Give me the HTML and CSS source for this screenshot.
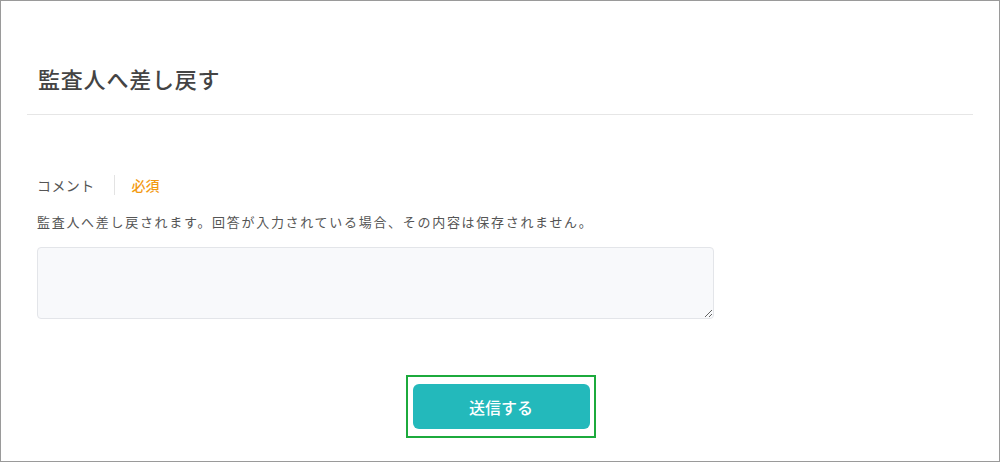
FILE: index.html
```html
<!DOCTYPE html>
<html lang="ja">
<head>
<meta charset="utf-8">
<link rel="stylesheet" href="styles.css">
</head>
<body>
<div class="frame">
  <div class="header">
    <h1 class="title">監査人へ差し戻す</h1>
  </div>
  <div class="content">
    <div class="label-row">
      <span class="label">コメント</span>
      <span class="required">必須</span>
    </div>
    <p class="desc">監査人へ差し戻されます。回答が入力されている場合、その内容は保存されません。</p>
    <textarea class="comment"></textarea>
    <div class="actions">
      <div class="focus-box">
        <button class="submit">送信する</button>
      </div>
    </div>
  </div>
</div>
</body>
</html>
```

FILE: styles.css
```css
* { box-sizing: border-box; }
html, body { margin: 0; padding: 0; background: #fff; }
body {
  font-family: "Noto Sans CJK JP", "Noto Sans", sans-serif;
  color: #444;
}
.frame {
  width: 1000px;
  height: 462px;
  border: 1px solid #9a9a9a;
  overflow: hidden;
}
.header {
  margin: 0 26px;
  height: 114px;
  border-bottom: 1px solid #e6e6e6;
  display: flex;
  align-items: flex-end;
  padding: 0 0 20px 11px;
}
.title {
  margin: 0;
  font-size: 22px;
  font-weight: 500;
  line-height: 32px;
  color: #444;
  letter-spacing: 0.8px;
}
.content {
  padding: 60px 36px 0 36px;
}
.label-row {
  display: flex;
  align-items: center;
  height: 20px;
}
.label {
  font-size: 14px;
  color: #555;
  padding-right: 19px;
  border-right: 1px solid #e3e3e3;
  line-height: 20px;
  letter-spacing: 0.4px;
}
.required {
  font-size: 14px;
  font-weight: 500;
  color: #f39a12;
  padding-left: 17px;
}
.desc {
  margin: 17px 0 0 0;
  font-size: 13px;
  line-height: 20px;
  color: #555;
  letter-spacing: 1.7px;
}
.comment {
  display: block;
  margin-top: 15px;
  width: 677px;
  height: 72px;
  background: #f8f9fb;
  border: 1px solid #e3e5e9;
  border-radius: 4px;
  resize: vertical;
}
.actions {
  display: flex;
  justify-content: center;
  margin-top: 56px;
}
.focus-box {
  width: 190px;
  height: 63px;
  border: 2px solid #1caa3c;
  display: flex;
  justify-content: center;
  padding-top: 7px;
  margin-left: 2px;
}
.submit {
  width: 177px;
  height: 45px;
  background: #23b9bb;
  border: none;
  border-radius: 6px;
  color: #fff;
  font-family: "Noto Sans CJK JP", sans-serif;
  font-size: 16px;
  font-weight: 500;
}
```
